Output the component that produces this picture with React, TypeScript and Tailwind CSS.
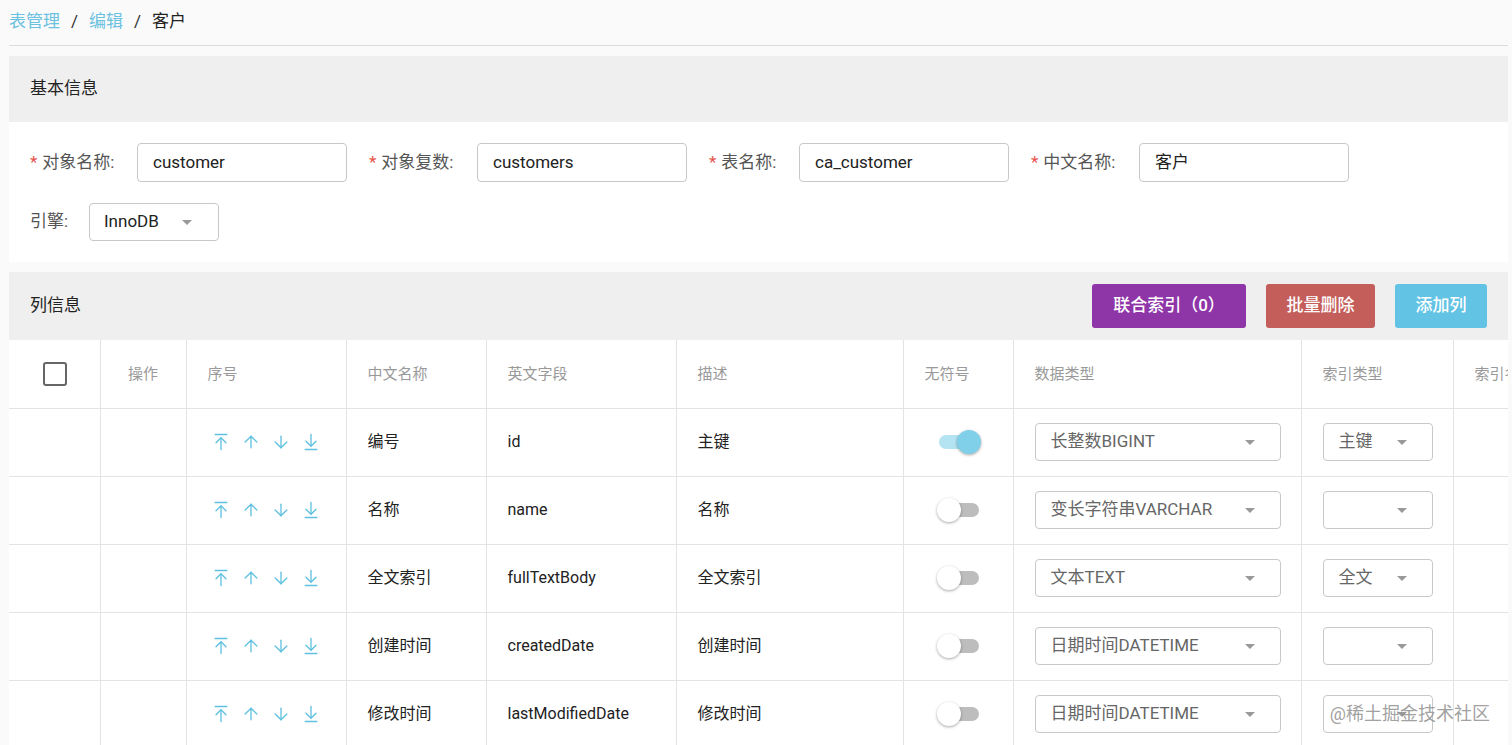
import { ArrowUpToLine, ArrowUp, ArrowDown, ArrowDownToLine } from 'lucide-react';

const font = { fontFamily: 'Roboto, "Noto Sans CJK SC", sans-serif' };

const rows = [
  { cn: '编号', en: 'id', desc: '主键', on: true, type: '长整数BIGINT', idx: '主键' },
  { cn: '名称', en: 'name', desc: '名称', on: false, type: '变长字符串VARCHAR', idx: '' },
  { cn: '全文索引', en: 'fullTextBody', desc: '全文索引', on: false, type: '文本TEXT', idx: '全文' },
  { cn: '创建时间', en: 'createdDate', desc: '创建时间', on: false, type: '日期时间DATETIME', idx: '' },
  { cn: '修改时间', en: 'lastModifiedDate', desc: '修改时间', on: false, type: '日期时间DATETIME', idx: '' },
];

function Caret() {
  return <span className="w-0 h-0 border-l-[5px] border-r-[5px] border-t-[5px] border-l-transparent border-r-transparent border-t-[#999]" />;
}

function Field({ label, value, w }: { label: string; value: string; w: string }) {
  return (
    <div className="flex items-center">
      <div className={`flex items-center ${w}`}>
        <span className="text-[#e5534b] text-[17px] mr-[5px]">*</span>
        <span className="text-[#555] text-[17px]">{label}:</span>
      </div>
      <div className="w-[210px] h-[39px] border border-[#c8c8c8] rounded-[4px] bg-white flex items-center px-[15px] text-[17px] text-[#222]">{value}</div>
    </div>
  );
}

function Toggle({ on }: { on: boolean }) {
  return (
    <div className="relative w-[44px] h-[24px] ml-[12px]">
      <div className={`absolute left-[2px] top-[5px] w-[40px] h-[14px] rounded-full ${on ? 'bg-[#b4e3f1]' : 'bg-[#bdbdbd]'}`} />
      <div className={`absolute top-0 w-[24px] h-[24px] rounded-full shadow-[0_1px_3px_rgba(0,0,0,0.35)] ${on ? 'left-[20px] bg-[#7fd0e8]' : 'left-0 bg-white'}`} />
    </div>
  );
}

export default function App() {
  const cols = ['', '操作', '序号', '中文名称', '英文字段', '描述', '无符号', '数据类型', '索引类型', '索引名称'];
  const widths = ['w-[91px]', 'w-[86px]', 'w-[160px]', 'w-[140px]', 'w-[190px]', 'w-[227px]', 'w-[110px]', 'w-[288px]', 'w-[152px]', 'w-[200px]'];
  return (
    <div className="h-[745px] overflow-hidden bg-[#fafafa] pl-[9px] pr-[4px] relative" style={font}>
      <div className="h-[46px] flex items-center text-[17px] border-b border-[#dcdcdc] pb-[2px]">
        <span className="text-[#6bc1e0]">表管理</span>
        <span className="mx-[11px] text-[#333]">/</span>
        <span className="text-[#6bc1e0]">编辑</span>
        <span className="mx-[11px] text-[#333]">/</span>
        <span className="text-[#222]">客户</span>
      </div>

      <div className="mt-[10px] bg-white">
        <div className="h-[66px] bg-[#efefef] flex items-center pl-[21px] text-[17px] text-[#222]">基本信息</div>
        <div className="px-[21px] py-[21px] flex flex-col gap-[21px]">
          <div className="flex items-center gap-[22px]">
            <Field label="对象名称" value="customer" w="w-[107px]" />
            <Field label="对象复数" value="customers" w="w-[108px]" />
            <Field label="表名称" value="ca_customer" w="w-[90px]" />
            <Field label="中文名称" value="客户" w="w-[108px]" />
          </div>
          <div className="flex items-center">
            <span className="text-[#555] text-[17px] w-[59px]">引擎:</span>
            <div className="w-[130px] h-[38px] border border-[#c8c8c8] rounded-[4px] flex items-center justify-between pl-[14px] pr-[26px] text-[17px] text-[#222]">
              <span>InnoDB</span>
              <Caret />
            </div>
          </div>
        </div>
      </div>

      <div className="mt-[10px] bg-white overflow-hidden">
        <div className="h-[68px] bg-[#efefef] flex items-center justify-between pl-[21px] pr-[21px]">
          <span className="text-[17px] text-[#222]">列信息</span>
          <div className="flex gap-[20px]">
            <button className="h-[44px] w-[154px] rounded-[3px] bg-[#8e35a8] text-white text-[17px] font-medium">联合索引（0）</button>
            <button className="h-[44px] w-[109px] rounded-[3px] bg-[#c45e5b] text-white text-[17px] font-medium">批量删除</button>
            <button className="h-[44px] w-[92px] rounded-[3px] bg-[#62c3e4] text-white text-[17px] font-medium">添加列</button>
          </div>
        </div>
        <table className="table-fixed border-collapse w-[1644px] min-w-[1644px]">
          <colgroup>
            {widths.map((w, i) => <col key={i} className={w} />)}
          </colgroup>
          <thead>
            <tr className="h-[68px]">
              {cols.map((c, i) => (
                <th key={i} className={`border border-[#e3e3e3] border-t-0 font-normal text-[15px] text-[#999] whitespace-nowrap overflow-hidden ${i === 1 ? 'text-center' : 'text-left pl-[21px]'} ${i === 0 ? 'border-l-0' : ''}`}>
                  {i === 0 ? <div className="w-[24px] h-[24px] border-2 border-[#666] rounded-[3px] ml-[13px]" /> : c}
                </th>
              ))}
            </tr>
          </thead>
          <tbody>
            {rows.map((r, i) => (
              <tr key={i} className="h-[68px] text-[16px] text-[#222]">
                <td className="border border-[#e3e3e3] border-l-0" />
                <td className="border border-[#e3e3e3]" />
                <td className="border border-[#e3e3e3] pl-[24px]">
                  <div className="flex gap-[10px] text-[#5fc1e0]">
                    <ArrowUpToLine size={20} strokeWidth={1.6} />
                    <ArrowUp size={20} strokeWidth={1.6} />
                    <ArrowDown size={20} strokeWidth={1.6} />
                    <ArrowDownToLine size={20} strokeWidth={1.6} />
                  </div>
                </td>
                <td className="border border-[#e3e3e3] pl-[21px]">{r.cn}</td>
                <td className="border border-[#e3e3e3] pl-[21px]">{r.en}</td>
                <td className="border border-[#e3e3e3] pl-[21px]">{r.desc}</td>
                <td className="border border-[#e3e3e3] pl-[21px]"><Toggle on={r.on} /></td>
                <td className="border border-[#e3e3e3] pl-[21px]">
                  <div className="w-[246px] h-[38px] border border-[#c8c8c8] rounded-[4px] flex items-center justify-between pl-[15px] pr-[25px] text-[17px] text-[#666]">
                    <span>{r.type}</span>
                    <Caret />
                  </div>
                </td>
                <td className="border border-[#e3e3e3] pl-[21px]">
                  <div className="w-[110px] h-[38px] border border-[#c8c8c8] rounded-[4px] flex items-center justify-between pl-[15px] pr-[25px] text-[17px] text-[#666]">
                    <span>{r.idx}</span>
                    <Caret />
                  </div>
                </td>
                <td className="border border-[#e3e3e3]" />
              </tr>
            ))}
          </tbody>
        </table>
      </div>

      <div className="absolute right-[22px] bottom-[18px] text-[18px] text-[#888]/80">@稀土掘金技术社区</div>
    </div>
  );
}
